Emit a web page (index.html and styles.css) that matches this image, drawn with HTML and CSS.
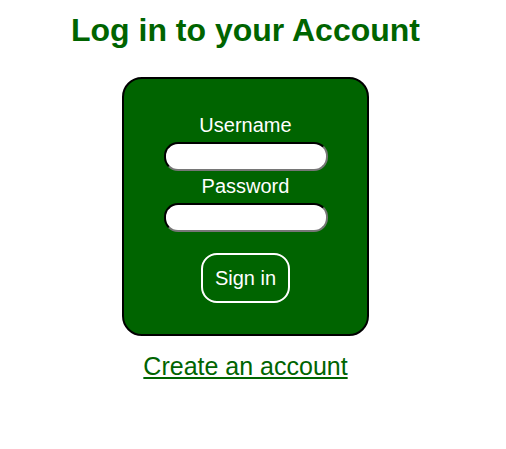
FILE: index.html
```html
<!DOCTYPE html>
<html>
<head>
<meta charset="utf-8">
<link rel="stylesheet" href="styles.css">
</head>
<body>
<main class="page">
  <h1 class="title">Log in to your Account</h1>
  <form class="card">
    <label class="label" for="u">Username</label>
    <input class="field" id="u" type="text">
    <label class="label" for="p">Password</label>
    <input class="field" id="p" type="password">
    <button class="btn" type="button">Sign in</button>
  </form>
  <a class="link" href="#">Create an account</a>
</main>
</body>
</html>
```
FILE: styles.css
```css
html, body {
  margin: 0;
  padding: 0;
  background: #fff;
}
body {
  font-family: "Liberation Sans", Arial, sans-serif;
}
.page {
  width: 491px;
  display: flex;
  flex-direction: column;
  align-items: center;
}
.title {
  margin: 12px 0 0 0;
  font-size: 32px;
  line-height: 37px;
  font-weight: bold;
  color: #006400;
}
.card {
  margin-top: 28px;
  width: 247px;
  height: 259px;
  box-sizing: border-box;
  background: #006400;
  border: 2px solid #000;
  border-radius: 20px;
  display: flex;
  flex-direction: column;
  align-items: center;
  padding-top: 35px;
}
.label {
  color: #fff;
  font-size: 20px;
  line-height: 23px;
}
.field {
  width: 164px;
  height: 29px;
  box-sizing: border-box;
  margin: 5px 0 4px 0;
  border: 2px inset #767676;
  border-top-color: #222;
  border-left-color: #222;
  border-radius: 14px;
  background: #fff;
  padding: 0 10px;
  font-size: 16px;
  outline: none;
}
.btn {
  margin-top: 17px;
  padding: 11px 12px;
  font-family: "Liberation Sans", Arial, sans-serif;
  font-size: 20px;
  line-height: 24px;
  color: #fff;
  background: transparent;
  border: 2px solid #fff;
  border-radius: 16px;
}
.link {
  margin-top: 16px;
  font-size: 25px;
  line-height: 29px;
  color: #006400;
  text-decoration: underline;
}
```
